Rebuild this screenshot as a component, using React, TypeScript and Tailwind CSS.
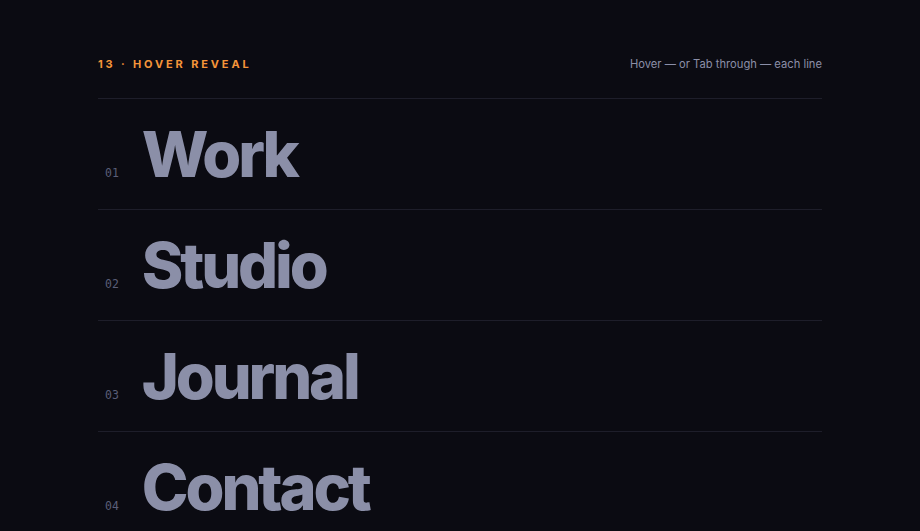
const items = [
  { n: '01', label: 'Work' },
  { n: '02', label: 'Studio' },
  { n: '03', label: 'Journal' },
  { n: '04', label: 'Contact' },
];

export default function App() {
  return (
    <div className="min-h-screen bg-[#0b0b12] font-['Inter','Liberation_Sans',sans-serif]">
      <div className="mx-auto w-[724px] pt-[57px]">
        <div className="flex items-center justify-between pb-[27px]">
          <span className="text-[11px] font-bold uppercase leading-[14px] tracking-[0.26em] text-[#f5953a]">
            13 · Hover reveal
          </span>
          <span className="text-[11.2px] leading-[14px] text-[#8b8fa8]">
            Hover — or Tab through — each line
          </span>
        </div>

        <ul>
          {items.map((item) => (
            <li key={item.n} className="border-t border-[#1e1e2a]">
              <a
                href="#"
                className="flex items-baseline gap-[23px] pt-[24px] pb-[23px] pl-[7px] outline-none"
              >
                <span className="font-['DejaVu_Sans_Mono','Liberation_Mono',monospace] text-[11.5px] text-[#5a5e78]">
                  {item.n}
                </span>
                <span className="text-[63px] font-extrabold leading-none tracking-[-0.05em] text-[#8b8fa8]">
                  {item.label}
                </span>
              </a>
            </li>
          ))}
        </ul>
      </div>
    </div>
  );
}
